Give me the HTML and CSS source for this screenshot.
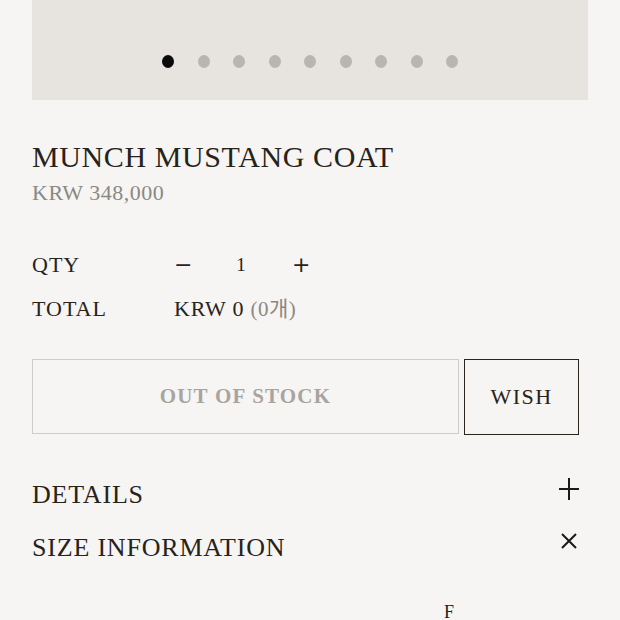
FILE: index.html
```html
<!DOCTYPE html>
<html lang="ko">
<head>
<meta charset="utf-8">
<link rel="stylesheet" href="styles.css">
</head>
<body>
<div class="page">
  <div class="gallery">
    <div class="dots">
      <span class="dot active"></span>
      <span class="dot"></span>
      <span class="dot"></span>
      <span class="dot"></span>
      <span class="dot"></span>
      <span class="dot"></span>
      <span class="dot"></span>
      <span class="dot"></span>
      <span class="dot"></span>
    </div>
  </div>
  <h1 class="title">MUNCH MUSTANG COAT</h1>
  <div class="price">KRW 348,000</div>
  <div class="opts">
    <div class="row">
      <div class="label">QTY</div>
      <div class="qty">
        <span class="qbtn">−</span>
        <span class="qnum">1</span>
        <span class="qbtn">+</span>
      </div>
    </div>
    <div class="row">
      <div class="label">TOTAL</div>
      <div class="total">KRW 0 <span class="cnt">(0개)</span></div>
    </div>
  </div>
  <div class="actions">
    <div class="btn soldout">OUT OF STOCK</div>
    <div class="btn wish">WISH</div>
  </div>
  <div class="acc">
    <div class="acc-row">
      <span class="acc-title">DETAILS</span>
      <svg class="acc-icon plus" width="22" height="22" viewBox="0 0 22 22"><path d="M11 0V22M1 11H21" stroke="#1c1a16" stroke-width="2" fill="none"/></svg>
    </div>
    <div class="acc-row">
      <span class="acc-title">SIZE INFORMATION</span>
      <svg class="acc-icon x" width="18" height="18" viewBox="0 0 18 18"><path d="M2 2L16 16M16 2L2 16" stroke="#1c1a16" stroke-width="2" fill="none"/></svg>
    </div>
  </div>
  <div class="size-table">
    <span class="size-head">F</span>
  </div>
</div>
</body>
</html>
```
FILE: styles.css
```css
html, body {
  margin: 0;
  padding: 0;
  background: #f6f5f3;
}
body {
  font-family: "Liberation Serif", "Noto Sans CJK KR", serif;
  color: #27231a;
}
.page {
  padding: 0 32px;
}
.gallery {
  height: 100px;
  background: #e7e4e0;
  display: flex;
  align-items: flex-end;
  justify-content: center;
}
.dots {
  display: flex;
  gap: 23.5px;
  padding-bottom: 32px;
}
.dot {
  width: 12px;
  height: 13px;
  border-radius: 50%;
  background: #b9b6b1;
}
.dot.active {
  background: #0a0a0a;
}
.title {
  margin: 41px 0 0;
  font-size: 30px;
  font-weight: normal;
  line-height: 32px;
  letter-spacing: 0.6px;
}
.price {
  margin-top: 7px;
  font-size: 22px;
  line-height: 26px;
  letter-spacing: 0.5px;
  color: #8c8883;
}
.opts {
  margin-top: 43px;
  display: flex;
  flex-direction: column;
  gap: 12px;
}
.row {
  display: flex;
  align-items: center;
  height: 32px;
  line-height: 32px;
  font-size: 22px;
}
.label {
  width: 142px;
  letter-spacing: 1px;
}
.qty {
  display: flex;
  align-items: center;
}
.qbtn {
  font-family: "DejaVu Sans", sans-serif;
  font-size: 22px;
  width: 16px;
  text-align: center;
}
.qnum {
  width: 102px;
  text-align: center;
  font-size: 19px;
}
.total {
  letter-spacing: 0.8px;
}
.cnt {
  color: #8c8883;
  font-size: 21px;
  letter-spacing: 0.5px;
}
.actions {
  margin-top: 34px;
  display: flex;
  align-items: flex-start;
  gap: 5px;
}
.btn {
  display: flex;
  align-items: center;
  justify-content: center;
  font-size: 22px;
  letter-spacing: 1.5px;
  box-sizing: border-box;
}
.soldout {
  flex: 0 0 427px;
  height: 75px;
  border: 1px solid #cfccc8;
  color: #a8a49f;
  font-weight: bold;
  font-size: 21px;
  letter-spacing: 1.2px;
}
.wish {
  flex: 0 0 115px;
  height: 76px;
  border: 1px solid #2a251c;
}
.acc {
  margin-top: 44px;
  display: flex;
  flex-direction: column;
  gap: 21px;
}
.acc-row {
  display: flex;
  justify-content: space-between;
  align-items: flex-start;
  height: 32px;
  padding-right: 8px;
}
.acc-title {
  font-size: 26px;
  line-height: 32px;
  letter-spacing: 0.8px;
}
.acc-icon.plus {
  margin-top: -1px;
}
.acc-icon.x {
  margin-right: 2px;
}
.size-table {
  margin-top: 37px;
  padding-left: 412px;
  font-size: 18px;
  line-height: 22px;
}
```
